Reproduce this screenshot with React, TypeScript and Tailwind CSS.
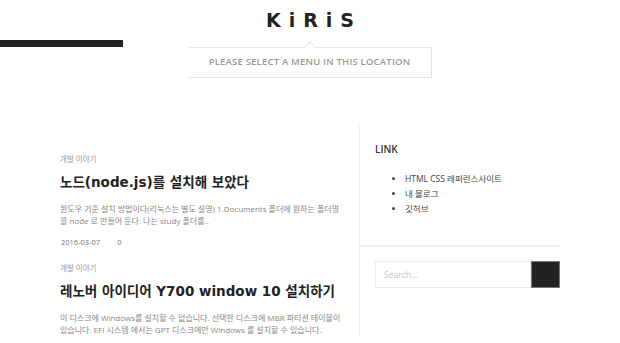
import React from "react";

const posts = [
  {
    category: "개발 이야기",
    title: "노드(node.js)를 설치해 보았다",
    excerpt:
      "윈도우 기준 설치 방법이다(리눅스는 별도 설명) 1.Documents 폴더에 원하는 폴더명을 node 로 만들어 둔다. 나는 study 폴더를..",
    date: "2016-03-07",
    comments: "0",
  },
  {
    category: "개발 이야기",
    title: "레노버 아이디어 Y700 window 10 설치하기",
    excerpt:
      "이 디스크에 Windows를 설치할 수 없습니다. 선택한 디스크에 MBR 파티션 테이블이 있습니다. EFI 시스템 에서는 GPT 디스크에만 Windows 를 설치할 수 있습니다.",
    date: "",
    comments: "",
  },
];

const links = ["HTML CSS 레퍼런스사이트", "내 블로그", "깃허브"];

export default function App() {
  return (
    <div className="min-h-[343px] w-full bg-white font-['Open_Sans','Noto_Sans_CJK_KR',sans-serif] text-[#333]">
      {/* header */}
      <header className="flex h-[40px] items-center justify-center">
        <h1 className="pl-[8px] font-['DejaVu_Sans',sans-serif] text-[19px] font-bold leading-none tracking-[8px] text-[#222]">
          KiRiS
        </h1>
      </header>
      <div className="h-[7px] w-[123px] bg-[#222]" />
      <nav className="relative mx-auto flex h-[31px] w-[243px] items-center justify-center border-y border-r border-[#e6e6e6] bg-white">
        <span className="absolute -top-[5px] left-1/2 h-[8px] w-[8px] -translate-x-1/2 rotate-45 border-l border-t border-[#e6e6e6] bg-white" />
        <span className="text-[9.5px] font-semibold uppercase tracking-[0.2px] text-[#999]">
          Please select a menu in this location
        </span>
      </nav>

      {/* content */}
      <main className="mx-auto mt-[48px] flex w-[500px]">
        <section className="w-[299px] pt-[28px]">
          {posts.map((p, i) => (
            <article key={i} className={i > 0 ? "mt-[16px]" : ""}>
              <div className="text-[7.5px] leading-[10px] text-[#999]">{p.category}</div>
              <h2 className="mt-[8px] font-['DejaVu_Sans','Noto_Sans_CJK_KR',sans-serif] text-[13.5px] font-bold leading-[20px] text-[#222]">
                {p.title}
              </h2>
              <p className="mt-[11px] pr-[14px] text-[8px] leading-[12px] text-[#888]">{p.excerpt}</p>
              {p.date && (
                <div className="mt-[10px] flex gap-[17px] pl-[1px] text-[7.5px] leading-[10px] text-[#777]">
                  <span>{p.date}</span>
                  <span>{p.comments}</span>
                </div>
              )}
            </article>
          ))}
        </section>

        <aside className="w-[201px] border-l border-[#ececec]">
          <div className="border-b-2 border-[#f0f0f0] pb-[29px] pl-[15px] pt-[16px]">
            <h3 className="text-[10px] font-semibold leading-[14px] text-[#333]">LINK</h3>
            <ul className="mt-[15px] list-disc pl-[30px] text-[8.5px] leading-[15px] text-[#444] marker:text-[#444]">
              {links.map((l) => (
                <li key={l}>{l}</li>
              ))}
            </ul>
          </div>
          <div className="flex pl-[15px] pt-[14px]">
            <input
              placeholder="Search..."
              className="h-[27px] w-[157px] border border-[#ececec] px-[8px] text-[8.5px] text-[#333] outline-none placeholder:text-[#c8c8c8]"
            />
            <button className="h-[27px] w-[29px] border border-[#777] bg-[#222]" />
          </div>
        </aside>
      </main>
    </div>
  );
}
